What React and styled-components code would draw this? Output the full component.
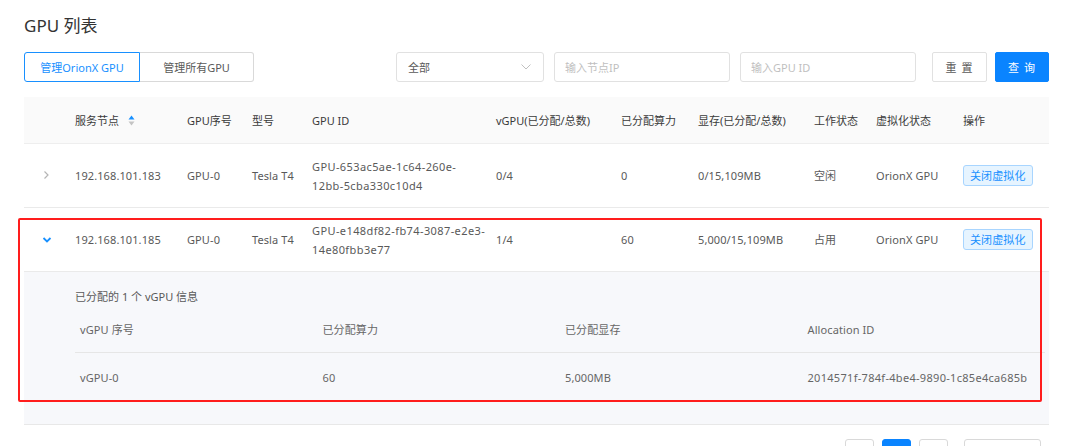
import React from "react";
import styled, { createGlobalStyle } from "styled-components";

const GlobalStyle = createGlobalStyle`
  body {
    margin: 0;
    background: #fff;
    font-family: "Noto Sans", "Noto Sans CJK SC", sans-serif;
    font-size: 11px;
    color: #595959;
  }
`;

const Page = styled.div`
  position: relative;
  width: 1025px;
  padding: 14px 0 0 24px;
`;

const Title = styled.h1`
  margin: 0;
  font-size: 17px;
  line-height: 24px;
  font-weight: 400;
  color: #333;
`;

const Toolbar = styled.div`
  display: flex;
  align-items: center;
  margin-top: 14px;
  height: 30px;
`;

const Tabs = styled.div`
  display: flex;
`;

const Tab = styled.button`
  height: 30px;
  width: ${(props) => props.width}px;
  padding: 0;
  font-family: inherit;
  font-size: 11px;
  background: #fff;
  cursor: pointer;
  color: ${(props) => (props.active ? "#1890ff" : "#595959")};
  border: 1px solid ${(props) => (props.active ? "#1890ff" : "#d9d9d9")};
  border-left-width: ${(props) => (props.active ? "1px" : "0")};
  border-radius: ${(props) => (props.active ? "3px 0 0 3px" : "0 3px 3px 0")};
`;

const Filters = styled.div`
  display: flex;
  align-items: center;
  margin-left: auto;
`;

const Select = styled.div`
  box-sizing: border-box;
  width: 148px;
  height: 30px;
  border: 1px solid #e1e1e1;
  border-radius: 3px;
  display: flex;
  align-items: center;
  justify-content: space-between;
  padding: 0 12px 0 11px;
  color: #595959;
`;

const Input = styled.input`
  box-sizing: border-box;
  width: 176px;
  height: 30px;
  margin-left: 10px;
  border: 1px solid #e1e1e1;
  border-radius: 3px;
  padding: 0 10px;
  font-family: inherit;
  font-size: 11px;
  outline: none;

  &::placeholder {
    color: #bfbfbf;
  }
`;

const Button = styled.button`
  box-sizing: border-box;
  height: 30px;
  width: ${(props) => props.width}px;
  margin-left: ${(props) => props.gap}px;
  padding: 0;
  font-family: inherit;
  font-size: 11px;
  letter-spacing: 1px;
  border-radius: 2px;
  cursor: pointer;
  border: 1px solid ${(props) => (props.primary ? "#0a84ff" : "#e1e1e1")};
  background: ${(props) => (props.primary ? "#0a84ff" : "#fff")};
  color: ${(props) => (props.primary ? "#fff" : "#595959")};
`;

const Table = styled.table`
  width: 1025px;
  margin-top: 15px;
  border-collapse: collapse;
  table-layout: fixed;
`;

const Th = styled.th`
  height: 46px;
  padding: 0;
  text-align: start;
  font-weight: 400;
  color: #3a3a3a;
  background: #fafafa;
  border-bottom: 1px solid #eee;
`;

const Td = styled.td`
  height: 63px;
  padding: 0 ${(props) => (props.spaced ? "10px" : "8px")} 0 ${(props) => (props.icon ? "18px" : "0")};
  color: #595959;
  line-height: 19px;
  letter-spacing: ${(props) => (props.spaced ? "0.4px" : "0.1px")};
  border-bottom: 1px solid #eaeaea;
`;

const HeadLabel = styled.span`
  display: inline-flex;
  align-items: center;
  gap: 9px;
`;

const Tag = styled.span`
  display: inline-block;
  height: 19px;
  line-height: 19px;
  padding: 0 6px;
  border: 1px solid #a8d5ff;
  border-radius: 3px;
  background: #e6f4ff;
  color: #1890ff;
`;

const ExpandCell = styled.td`
  padding: 16px 4px 22px 51px;
  background: #f7f8fb;
  border-bottom: 1px solid #e8e8e8;
`;

const Caption = styled.div`
  line-height: 18px;
  color: #595959;
`;

const SubTable = styled.div`
  display: grid;
  grid-template-columns: repeat(4, 1fr);
`;

const SubCell = styled.div`
  display: flex;
  align-items: center;
  padding-left: 5px;
  height: ${(props) => (props.head ? "46px" : "49px")};
  color: #666;
  letter-spacing: ${(props) => (props.spaced ? "0.3px" : "0.1px")};
  border-bottom: ${(props) => (props.head ? "1px solid #e6e6e6" : "none")};
`;

const Pagination = styled.div`
  display: flex;
  justify-content: flex-end;
  align-items: center;
  gap: 8px;
  width: 1017px;
  margin-top: 14px;
`;

const PageItem = styled.div`
  box-sizing: border-box;
  width: ${(props) => (props.wide ? "77px" : "29px")};
  height: 29px;
  margin-left: ${(props) => (props.wide ? "8px" : "0")};
  border: 1px solid ${(props) => (props.active ? "#0a84ff" : "#d9d9d9")};
  background: ${(props) => (props.active ? "#0a84ff" : "#fff")};
  color: ${(props) => (props.active ? "#fff" : "#595959")};
  border-radius: 3px;
  display: flex;
  align-items: center;
  justify-content: center;
`;

const Highlight = styled.div`
  position: absolute;
  left: 18px;
  top: 218px;
  width: 1020px;
  height: 180px;
  border: 2px solid #ff1d1d;
  border-radius: 2px;
  pointer-events: none;
`;

const SortIcon = () => (
  <svg width="7" height="11" viewBox="0 0 7 11">
    <path d="M3.5 0.5 L6.5 4.5 H0.5 Z" fill="#1890ff" />
    <path d="M3.5 10.5 L6.5 6.5 H0.5 Z" fill="#c4c4c4" />
  </svg>
);

const Chevron = ({ open }) =>
  open ? (
    <svg width="10" height="8" viewBox="0 0 10 8">
      <path d="M1.5 2 L5 5.5 L8.5 2" fill="none" stroke="#1890ff" strokeWidth="1.8" />
    </svg>
  ) : (
    <svg width="8" height="10" viewBox="0 0 8 10">
      <path d="M2.5 1.5 L6 5 L2.5 8.5" fill="none" stroke="#b5b5b5" strokeWidth="1.2" />
    </svg>
  );

const SelectArrow = () => (
  <svg width="10" height="6" viewBox="0 0 10 6">
    <path d="M0.5 0.5 L5 5 L9.5 0.5" fill="none" stroke="#c0c0c0" strokeWidth="1" />
  </svg>
);

const columns = [
  { w: 51, label: "" },
  { w: 112, label: "服务节点", sort: true },
  { w: 65, label: "GPU序号" },
  { w: 60, label: "型号" },
  { w: 184, label: "GPU ID" },
  { w: 125, label: "vGPU(已分配/总数)" },
  { w: 77, label: "已分配算力" },
  { w: 116, label: "显存(已分配/总数)" },
  { w: 62, label: "工作状态" },
  { w: 87, label: "虚拟化状态" },
  { w: 86, label: "操作" },
];

const gpus = [
  {
    node: "192.168.101.183",
    idx: "GPU-0",
    model: "Tesla T4",
    id: "GPU-653ac5ae-1c64-260e-12bb-5cba330c10d4",
    vgpu: "0/4",
    compute: "0",
    mem: "0/15,109MB",
    status: "空闲",
    virt: "OrionX GPU",
  },
  {
    node: "192.168.101.185",
    idx: "GPU-0",
    model: "Tesla T4",
    id: "GPU-e148df82-fb74-3087-e2e3-14e80fbb3e77",
    vgpu: "1/4",
    compute: "60",
    mem: "5,000/15,109MB",
    status: "占用",
    virt: "OrionX GPU",
    open: true,
    vgpus: [
      { idx: "vGPU-0", compute: "60", mem: "5,000MB", alloc: "2014571f-784f-4be4-9890-1c85e4ca685b" },
    ],
  },
];

const subHeads = ["vGPU 序号", "已分配算力", "已分配显存", "Allocation ID"];

const App = () => {
  return (
    <>
      <GlobalStyle />
      <Page>
        <Title>GPU 列表</Title>

        <Toolbar>
          <Tabs>
            <Tab active width={116}>管理OrionX GPU</Tab>
            <Tab width={114}>管理所有GPU</Tab>
          </Tabs>
          <Filters>
            <Select>
              <span>全部</span>
              <SelectArrow />
            </Select>
            <Input placeholder="输入节点IP" />
            <Input placeholder="输入GPU ID" />
            <Button width={55} gap={16}>重 置</Button>
            <Button primary width={54} gap={8}>查 询</Button>
          </Filters>
        </Toolbar>

        <Table>
          <colgroup>
            {columns.map((c, i) => (
              <col key={i} style={{ width: c.w }} />
            ))}
          </colgroup>
          <thead>
            <tr>
              {columns.map((c, i) => (
                <Th key={i}>
                  {c.sort ? (
                    <HeadLabel>
                      {c.label}
                      <SortIcon />
                    </HeadLabel>
                  ) : (
                    c.label
                  )}
                </Th>
              ))}
            </tr>
          </thead>
          <tbody>
            {gpus.map((g, i) => (
              <React.Fragment key={i}>
                <tr>
                  <Td icon>
                    <Chevron open={g.open} />
                  </Td>
                  <Td>{g.node}</Td>
                  <Td>{g.idx}</Td>
                  <Td>{g.model}</Td>
                  <Td spaced>{g.id}</Td>
                  <Td>{g.vgpu}</Td>
                  <Td>{g.compute}</Td>
                  <Td>{g.mem}</Td>
                  <Td>{g.status}</Td>
                  <Td>{g.virt}</Td>
                  <Td>
                    <Tag>关闭虚拟化</Tag>
                  </Td>
                </tr>
                {g.open && (
                  <tr>
                    <ExpandCell colSpan={columns.length}>
                      <Caption>已分配的 {g.vgpus.length} 个 vGPU 信息</Caption>
                      <SubTable>
                        {subHeads.map((h) => (
                          <SubCell head key={h}>{h}</SubCell>
                        ))}
                        {g.vgpus.map((v) => (
                          <React.Fragment key={v.idx}>
                            <SubCell>{v.idx}</SubCell>
                            <SubCell>{v.compute}</SubCell>
                            <SubCell>{v.mem}</SubCell>
                            <SubCell spaced>{v.alloc}</SubCell>
                          </React.Fragment>
                        ))}
                      </SubTable>
                    </ExpandCell>
                  </tr>
                )}
              </React.Fragment>
            ))}
          </tbody>
        </Table>

        <Pagination>
          <PageItem>&lt;</PageItem>
          <PageItem active>1</PageItem>
          <PageItem>&gt;</PageItem>
          <PageItem wide>10 条/页</PageItem>
        </Pagination>

        <Highlight />
      </Page>
    </>
  );
};

export default App;
